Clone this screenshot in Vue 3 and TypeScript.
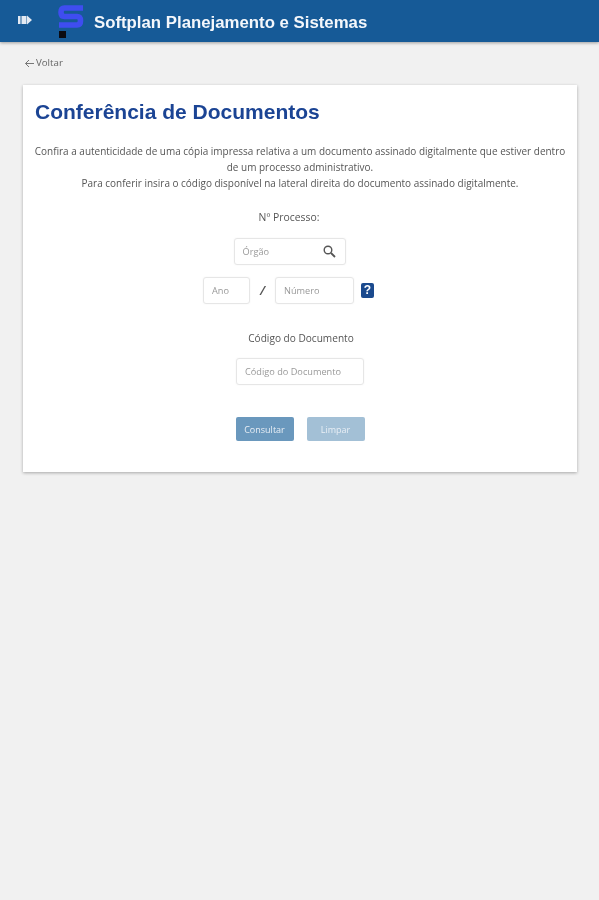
<template>
  <div class="page">
    <header class="topbar">
      <svg class="menu-icon soft" width="14" height="10" viewBox="0 0 14 10">
        <rect x="0" y="1" width="2.5" height="8" fill="#e3e9f2" />
        <rect x="3.5" y="1" width="5" height="8" fill="#e3e9f2" />
        <path d="M9 0.5 L14 5 L9 9.5 Z" fill="#e3e9f2" />
      </svg>
      <div class="logo soft">
        <svg width="26" height="38" viewBox="0 0 26 38">
          <path d="M25 6 H6.500 Q3 6 3 10.250 Q3 14.500 6.500 14.500 H19 Q22.500 14.500 22.500 18.750 Q22.500 23 19 23 H1" fill="none" stroke="#3f4df0" stroke-width="5.600" />
          <rect x="1" y="29" width="7" height="7" fill="#0b0b12" />
        </svg>
      </div>
      <span class="brand soft">Softplan Planejamento e Sistemas</span>
    </header>

    <a class="back soft">
      <svg width="10" height="9" viewBox="0 0 10 9">
        <path d="M10 4.500 H1.500 M5 1 L1.500 4.500 L5 8" fill="none" stroke="#777" stroke-width="1" />
      </svg>
      <span>Voltar</span>
    </a>

    <main class="card">
      <h1 class="soft">Conferência de Documentos</h1>
      <p class="intro soft">
        Confira a autenticidade de uma cópia impressa relativa a um documento assinado digitalmente que estiver dentro de um processo administrativo.<br />
        Para conferir insira o código disponível na lateral direita do documento assinado digitalmente.
      </p>

      <div class="label first soft">Nº Processo:</div>

      <div class="field orgao soft">
        <span>Órgão</span>
        <svg width="13" height="13" viewBox="0 0 13 13">
          <circle cx="5" cy="5" r="3.800" fill="none" stroke="#555" stroke-width="1.400" />
          <path d="M8 8 L12 12" stroke="#555" stroke-width="1.800" />
        </svg>
      </div>

      <div class="row soft">
        <div class="field ano"><span>Ano</span></div>
        <span class="slash">/</span>
        <div class="field numero"><span>Número</span></div>
        <span class="help">?</span>
      </div>

      <div class="label second soft">Código do Documento</div>
      <div class="field codigo soft"><span>Código do Documento</span></div>

      <div class="actions soft">
        <button class="primary">Consultar</button>
        <button class="secondary">Limpar</button>
      </div>
    </main>
  </div>
</template>

<script setup lang="ts">
</script>

<style>
html, body { margin: 0; background: #f1f1f1; }
</style>

<style scoped>
.page {
  min-height: 900px;
  background: #f1f1f1;
  font-family: "Open Sans", "Liberation Sans", sans-serif;
  color: #555;
}
.soft { filter: blur(0.45px); }
.topbar {
  height: 42px;
  background: #165a97;
  box-shadow: 0 1px 3px rgba(0, 0, 0, 0.35);
  display: flex;
  align-items: center;
  padding-left: 18px;
  box-sizing: border-box;
}
.menu-icon { flex: none; margin-top: -2px; }
.logo { margin-left: 26px; height: 38px; margin-top: -1px; }
.brand {
  margin-left: 10px;
  margin-top: 4px;
  font: bold 16.800px "Liberation Sans", sans-serif;
  color: #f4f7fb;
}
.back {
  display: flex;
  gap: 2px;
  margin: 14px 0 0 24px;
  height: 29px;
  align-items: flex-start;
  line-height: 14px;
  font-size: 9.700px;
  color: #666;
}
.back svg { margin-top: 3px; }
.card {
  margin: 0 22px 0 23px;
  height: 387px;
  box-sizing: border-box;
  background: #fff;
  box-shadow: 0 1px 3px rgba(0, 0, 0, 0.3);
  padding: 15px 11px 0 12px;
  display: flex;
  flex-direction: column;
  align-items: center;
}
h1 {
  align-self: flex-start;
  margin: 0;
  font: bold 21px/24px "Liberation Sans", sans-serif;
  color: #1b4494;
}
.intro {
  margin: 19px -2px 0 -3px;
  text-align: center;
  font-size: 9.970px;
  line-height: 16px;
  color: #555;
}
.label { line-height: 14px; color: #555; }
.label.first { font-size: 10.400px; margin-top: 19px; margin-right: 23px; }
.label.second { font-size: 10.100px; margin-top: 27px; margin-right: -1px; }
.field {
  box-sizing: border-box;
  background: #fff;
  border: 1px solid #e6e6e6;
  border-radius: 3px;
  display: flex;
  align-items: center;
  justify-content: space-between;
  font-size: 9.200px;
  color: #999;
  padding: 0 8px;
  box-shadow: 0 0 2px rgba(0, 0, 0, 0.05);
}
.orgao { width: 112px; height: 27px; margin-top: 14px; margin-right: 22px; padding-right: 9px; }
.row { display: flex; align-items: center; margin-top: 11px; margin-right: 24px; height: 28px; }
.ano { width: 47px; height: 27px; }
.numero { width: 79px; height: 27px; }
.slash { width: 25px; text-align: center; font-size: 13px; font-style: italic; font-weight: 600; color: #555; }
.help {
  width: 13px;
  height: 15px;
  margin-left: 7px;
  background: #1b4a8e;
  color: #fff;
  border-radius: 2px;
  font: bold 12px/15px "Liberation Sans", sans-serif;
  text-align: center;
}
.codigo { width: 128px; height: 27px; margin-top: 13px; margin-right: 1px; }
.actions { display: flex; gap: 13px; margin-top: 32px; margin-right: 1px; }
button {
  height: 24px;
  border: 0;
  border-radius: 2px;
  color: #e8eef5;
  font: 9px "Open Sans", sans-serif;
  padding: 0;
}
.primary { width: 58px; background: #6a98bd; }
.secondary { width: 58px; background: #a3c0d6; }
</style>
